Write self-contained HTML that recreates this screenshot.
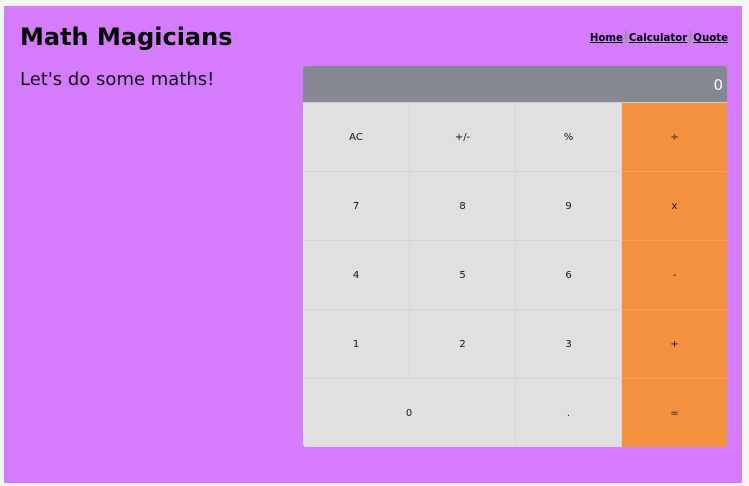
<!DOCTYPE html>
<html><head><style>
html,body{margin:0;padding:0;width:749px;height:486px;background:#f4f4f4;overflow:hidden;font-family:"DejaVu Sans","Liberation Sans",sans-serif;}
.main{position:absolute;left:4px;top:6px;width:738px;height:477px;background:#d57cfd;}
h1{position:absolute;left:16px;top:17px;margin:0;font-size:24px;font-weight:bold;color:#000;}
.sub{position:absolute;left:16px;top:63px;font-size:18px;color:#111}
.nav{position:absolute;right:14px;top:24px;font-size:10.2px;font-weight:bold;color:#000}
.nav span{text-decoration:underline}
.nav i{display:inline-block;width:2px;height:13px;background:#999;vertical-align:-2px;margin:0 2px}
.calc{position:absolute;left:299px;top:60px;width:424px;height:381px;border-radius:3px;overflow:hidden;background:#e0e0e0}
.disp{height:36px;background:#858791;color:#fff;text-align:right;font-size:15px;line-height:38px;padding-right:4px;border-bottom:1px solid #ccc}
.grid{display:grid;grid-template-columns:107px 106px 106px 105px;grid-template-rows:repeat(5,69px)}
.grid div{display:flex;align-items:center;justify-content:center;font-size:10px;color:#111;border-right:1px solid #d4d4d4;border-bottom:1px solid #d4d4d4;box-sizing:border-box}
.grid .o{background:#f4913f;border-right:none;border-bottom:1px solid #f0a060}
.grid .z{grid-column:span 2}
</style></head><body>
<div class="main">
<h1>Math Magicians</h1>
<div class="sub">Let's do some maths!</div>
<div class="nav"><span>Home</span><i></i><span>Calculator</span><i></i><span>Quote</span></div>
<div class="calc">
<div class="disp">0</div>
<div class="grid">
<div>AC</div><div>+/-</div><div>%</div><div class="o">÷</div>
<div>7</div><div>8</div><div>9</div><div class="o">x</div>
<div>4</div><div>5</div><div>6</div><div class="o">-</div>
<div>1</div><div>2</div><div>3</div><div class="o">+</div>
<div class="z">0</div><div>.</div><div class="o">=</div>
</div></div>
</div>
</body></html>
